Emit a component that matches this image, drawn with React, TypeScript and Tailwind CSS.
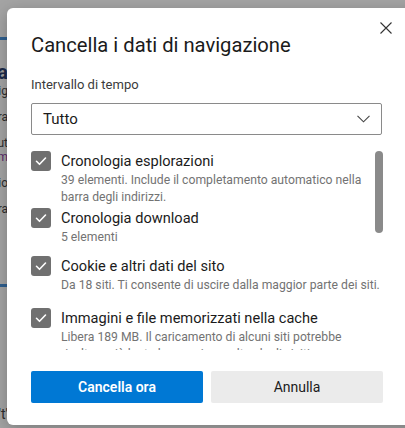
import React from 'react'

const items = [
  {
    title: 'Cronologia esplorazioni',
    desc: ['39 elementi. Include il completamento automatico nella', 'barra degli indirizzi.'],
    h: 'h-[57px]',
  },
  { title: 'Cronologia download', desc: ['5 elementi'], h: 'h-[48px]' },
  { title: 'Cookie e altri dati del sito', desc: ['Da 18 siti. Ti consente di uscire dalla maggior parte dei siti.'], h: 'h-[52px]' },
  {
    title: 'Immagini e file memorizzati nella cache',
    desc: ['Libera 189 MB. Il caricamento di alcuni siti potrebbe', 'risultare più lento la prossima volta che li visiti.'],
    h: 'h-[60px]',
  },
]

function CheckBox() {
  return (
    <div className="mt-[1px] w-[20px] h-[20px] shrink-0 rounded-[3px] bg-[#707070] flex items-center justify-center">
      <svg width="14" height="14" viewBox="0 0 14 14" fill="none">
        <path d="M2.5 7.3l3 3 6-6.3" stroke="#fff" strokeWidth="1.6" strokeLinecap="round" strokeLinejoin="round" />
      </svg>
    </div>
  )
}

export default function App() {
  return (
    <div className="relative w-[405px] h-[428px] overflow-hidden bg-[#a4a4a4] font-['Roboto',sans-serif]">
      {/* page behind the overlay */}
      <div className="w-[8px] h-full overflow-hidden flex flex-col text-[#2d2d2d]">
        <div className="h-[37px]" />
        <div className="h-[3px] w-full bg-[#2f5f8f]" />
        <div className="h-[22px]" />
        <div className="flex justify-end whitespace-nowrap text-[20px] font-bold text-[#1c2a4a] leading-[20px]">Impostazioni la</div>
        <div className="flex justify-end whitespace-nowrap text-[12px] leading-[14px] mt-[2px]">Personalizza il sig</div>
        <div className="flex justify-end whitespace-nowrap text-[12px] leading-[14px] mt-[12px]">Cancella cronolo ra</div>
        <div className="flex justify-end whitespace-nowrap text-[12px] leading-[14px] mt-[12px]">Vai a strumenti ut</div>
        <div className="flex justify-end whitespace-nowrap text-[12px] leading-[14px] text-[#5a2a6a]">Vedi anche di m</div>
        <div className="flex justify-end whitespace-nowrap text-[12px] leading-[14px] mt-[12px]">Opzioni di navigazio</div>
        <div className="flex justify-end whitespace-nowrap text-[12px] leading-[14px] mt-[12px]">Nella ba ra</div>
        <div className="h-[68px]" />
        <div className="h-[3px] w-full bg-[#2f5f8f]" />
        <div className="flex-1" />
        <div className="flex justify-end whitespace-nowrap text-[14px] leading-[16px] mb-[6px]">quest't'</div>
      </div>

      {/* dialog */}
      <div className="absolute left-[7px] top-[8px] w-[420px] h-[417px] bg-white rounded-[6px] shadow-[0_4px_16px_rgba(0,0,0,0.25)] text-[#1b1b1b]">
        <div className="absolute left-[373px] top-[14px] w-[12px] h-[12px]">
          <svg width="12" height="12" viewBox="0 0 12 12" fill="none">
            <path d="M0.5 0.5l11 11M11.5 0.5l-11 11" stroke="#333" strokeWidth="1.1" />
          </svg>
        </div>
        <div className="pl-[24px] pr-[45px] flex flex-col">
          <div className="mt-[25px] text-[20.2px] leading-[24px] text-[#1b1b1b]">Cancella i dati di navigazione</div>
          <div className="mt-[19px] text-[13px] leading-[18px] text-[#3b3b3b]">Intervallo di tempo</div>
          <div className="mt-[9px] w-[351px] h-[32px] border border-[#8a8a8a] rounded-[2px] flex items-center justify-between pl-[11px] pr-[11px]">
            <span className="text-[15px] text-[#1b1b1b]">Tutto</span>
            <svg width="13" height="8" viewBox="0 0 13 8" fill="none">
              <path d="M0.5 0.8l6 6 6-6" stroke="#444" strokeWidth="1.1" />
            </svg>
          </div>
          <div className="mt-[6px] w-[352px] h-[209px] overflow-hidden relative flex">
            <div className="flex-1 flex flex-col pt-[9px]">
              {items.map((it) => (
                <div key={it.title} className={`flex gap-[10px] shrink-0 ${it.h}`}>
                  <CheckBox />
                  <div className="flex flex-col">
                    <div className="text-[14.6px] leading-[22px] text-[#1b1b1b] whitespace-nowrap">{it.title}</div>
                    {it.desc.map((d) => (
                      <div key={d} className="text-[12.2px] leading-[17px] text-[#737373] whitespace-nowrap">{d}</div>
                    ))}
                  </div>
                </div>
              ))}
            </div>
            <div className="absolute right-0 top-[10px] w-[8px] h-[82px] rounded-full bg-[#8a8a8a]" />
          </div>
          <div className="mt-[21px] flex gap-[8px] w-[352px]">
            <button className="flex-1 h-[32px] rounded-[2px] bg-[#0078d4] text-white text-[14px] font-semibold">Cancella ora</button>
            <button className="flex-1 h-[32px] rounded-[2px] bg-[#ebebeb] text-[#1b1b1b] text-[14px]">Annulla</button>
          </div>
        </div>
      </div>
    </div>
  )
}
